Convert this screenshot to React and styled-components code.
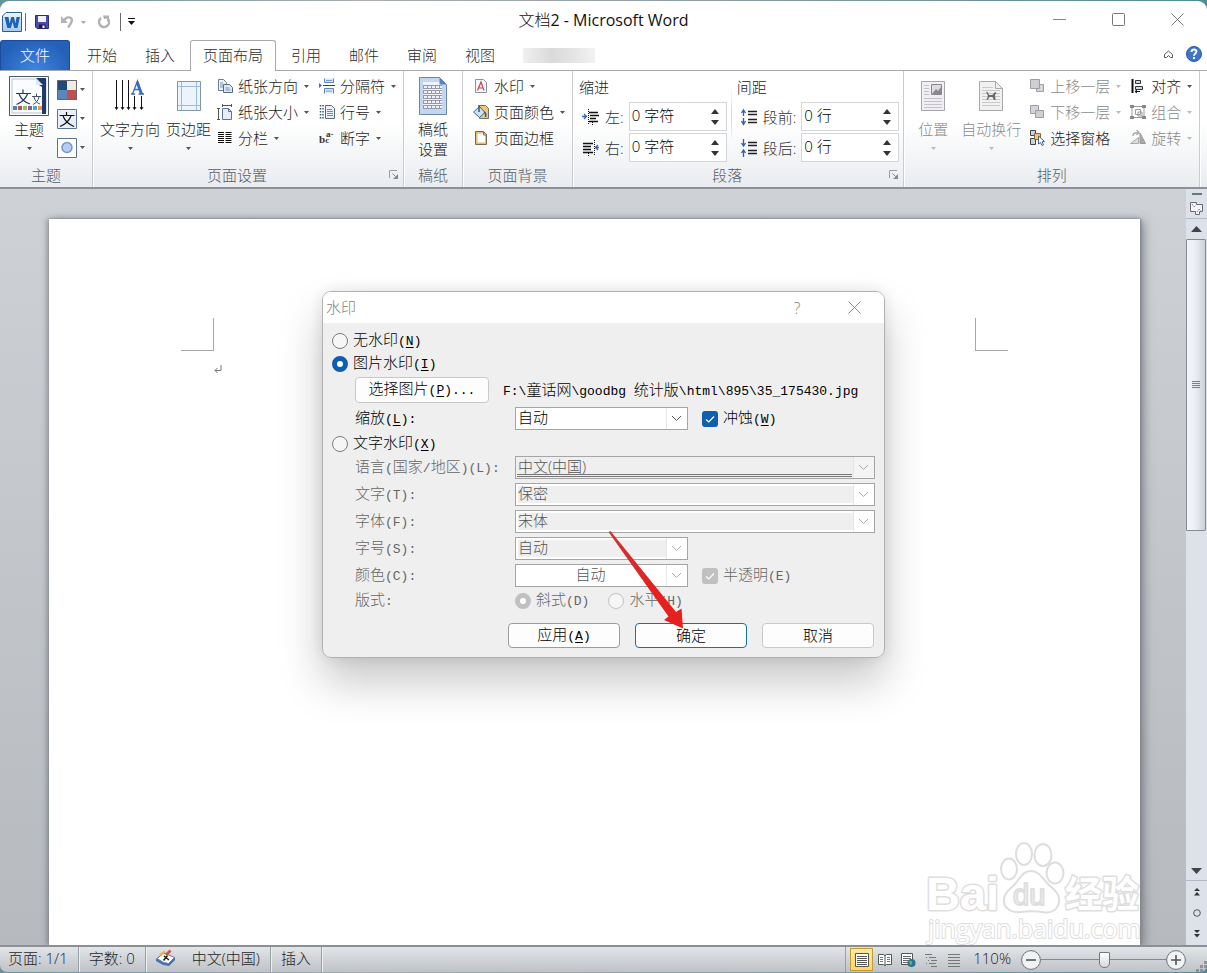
import React from "react";
import styled, { createGlobalStyle, css } from "styled-components";

const uiFont = '"Open Sans", "Noto Sans CJK SC Light", "Noto Sans CJK SC DemiLight", "Noto Sans CJK SC", sans-serif';

const Global = createGlobalStyle`
  * { box-sizing: border-box; }
  body { margin: 0; background: linear-gradient(90deg, #64949a, #a9adb0 30%, #8d9da0 60%, #4f8d92); font-family: ${uiFont}; font-size: 15px; font-weight: 350; color: #222; }
  button, input, select { font: inherit; color: inherit; }
  svg { display: block; flex: none; }
`;

/* ---------- window frame ---------- */
const Window = styled.div`
  min-height: 100vh;
  display: flex;
  flex-direction: column;
  padding: 1px 0;
`;
const PlainButton = styled.button`
  border: 0;
  padding: 0;
  background: none;
  display: flex;
  align-items: center;
  justify-content: center;
`;
const TitleBar = styled.header`
  height: 39px;
  display: grid;
  grid-template-columns: 1fr auto 1fr;
  align-items: center;
  background: #fff;
  border-radius: 9px 9px 0 0;
`;
const QuickAccess = styled.div`
  display: flex;
  align-items: center;
  gap: 11px;
  padding: 3px 0 0 2px;
`;
const QuickPair = styled.div`
  display: flex;
  align-items: center;
  gap: 7px;
`;
const QuickRule = styled.span`
  width: 1px;
  height: 18px;
  background: #6a6a6a;
  margin: ${(p) => (p.$tight ? "0 -2px 0 -4px" : "0 0 0 -2px")};
`;
const Title = styled.h1`
  margin: 0;
  padding-bottom: 2px;
  font-size: 16px;
  line-height: 20px;
  font-weight: 400;
  color: #111;
`;
const WindowButtons = styled.div`
  display: flex;
  justify-content: flex-end;
`;
const WindowButton = styled(PlainButton)`
  width: 59px;
  height: 39px;
  padding-bottom: 3px;
`;

/* ---------- tabs ---------- */
const TabBar = styled.nav`
  height: 31px;
  display: flex;
  background: #fff;
  border-bottom: 1px solid #a6a9ad;
`;
const FileTab = styled(PlainButton)`
  width: 70px;
  margin-right: 3px;
  padding-bottom: 2px;
  color: #fff;
  border: 1px solid #1c4b9c;
  border-bottom: 0;
  border-radius: 3px 3px 0 0;
  background: radial-gradient(ellipse at 50% 100%, #3f86dd, #2560b8 75%);
`;
const Tab = styled(PlainButton)`
  padding: 0 14px 2px;
  color: #2c2c2c;
  ${(p) =>
    p.$active &&
    css`
      padding: 0 12px 3px;
      margin: 0 1px -1px;
      background: #fff;
      border: 1px solid #a6a9ad;
      border-bottom: 0;
      border-radius: 3px 3px 0 0;
    `}
`;
const AddinTab = styled.div`
  align-self: center;
  width: 72px;
  height: 15px;
  margin-left: 14px;
  background: linear-gradient(90deg, #f0f0f0, #dadada 40%, #e4e4e4 70%, #f3f3f3);
`;
const TabTools = styled.div`
  margin-left: auto;
  display: flex;
  align-items: center;
  gap: 12px;
  padding: 0 5px 2px 0;
`;

/* ---------- ribbon ---------- */
const Ribbon = styled.div`
  height: 118px;
  display: flex;
  background: linear-gradient(#fff, #fff 45%, #e9ecf0);
  border-bottom: 2px solid #8d9095;
`;
const GroupBox = styled.section`
  display: flex;
  flex-direction: column;
  border-right: 1px solid #c9ccd1;
  box-shadow: 1px 0 0 #fff;
`;
const GroupBody = styled.div`
  flex: 1;
  display: flex;
  padding: 0 ${(p) => p.$right}px 0 ${(p) => p.$left}px;
  gap: ${(p) => p.$gap || 0}px;
`;
const GroupFooter = styled.div`
  height: 24px;
  display: grid;
  grid-template-columns: ${(p) => (p.$launcher ? "1fr 22px" : "1fr")};
  align-items: center;
  text-align: center;
  line-height: 20px;
  color: #565b66;
`;
const GroupLabel = styled.span`
  white-space: nowrap;
`;
const Launcher = styled(PlainButton)`
  justify-content: flex-end;
  padding-right: 4px;
`;
const BigButtonBox = styled(PlainButton)`
  flex-direction: column;
  justify-content: flex-start;
  min-width: ${(p) => p.$width || 30}px;
  padding-top: 5px;
  line-height: 20px;
  white-space: nowrap;
  color: ${(p) => (p.$dim ? "#8a8a8a" : "#1c1c1c")};
`;
const BigIcon = styled.span`
  height: 40px;
  display: flex;
  align-items: center;
  margin-bottom: 3px;
`;
const CaretBelow = styled.span`
  padding-top: 8px;
`;
const Stack = styled.div`
  display: flex;
  flex-direction: column;
  padding-top: ${(p) => p.$top || 2}px;
  margin-left: ${(p) => p.$shift || 0}px;
`;
const SmallButtonBox = styled(PlainButton)`
  height: 26px;
  justify-content: flex-start;
  gap: 5px;
  white-space: nowrap;
  line-height: 20px;
  color: ${(p) => (p.$dim ? "#8a8a8a" : "#1c1c1c")};
`;
const CaretAfter = styled.span`
  padding-left: 1px;
`;
const GalleryButton = styled(PlainButton)`
  height: 29px;
  gap: 3px;
`;
const IndentColumn = styled.div`
  display: flex;
  flex-direction: column;
  gap: 2px;
`;
const ColumnHeading = styled.div`
  height: 29px;
  padding-top: 6px;
  line-height: 20px;
`;
const SpinRow = styled.label`
  height: 29px;
  display: flex;
  align-items: center;
  gap: 5px;
  padding-left: 3px;
  color: #333;
`;
const SpinBox = styled.span`
  width: 98px;
  height: 29px;
  display: flex;
  border: 1px solid #d3d6da;
  background: #fff;
`;
const SpinInput = styled.input`
  flex: 1;
  width: 40px;
  border: 0;
  outline: 0;
  padding: 0 2px 4px;
  background: none;
  color: #000;
`;
const SpinArrows = styled.span`
  width: 22px;
  display: flex;
  flex-direction: column;
  justify-content: center;
  gap: 6px;
`;
const ColumnRule = styled.span`
  width: 1px;
  height: 62px;
  margin: 14px 5px 0 4px;
  background: linear-gradient(#fff, #d3d6da, #fff);
`;

/* ---------- workspace ---------- */
const Workspace = styled.main`
  flex: 1;
  display: flex;
  background: linear-gradient(#ced1d5, #b6babf);
`;
const Desk = styled.div`
  flex: 1;
  display: flex;
  padding: 30px 46px 0 49px;
`;
const Page = styled.article`
  flex: 1;
  display: flex;
  flex-direction: column;
  background: #fff;
  padding-top: 99px;
  box-shadow: 1px 0 2px #85898f, 4px 2px 9px rgba(70, 75, 82, 0.5), -2px 0 5px rgba(70, 75, 82, 0.4);
`;
const CropMarks = styled.div`
  display: flex;
  justify-content: space-between;
  padding: 0 132px;
`;
const CropMark = styled.span`
  width: 33px;
  height: 33px;
  border-bottom: 1px solid #a8a8a8;
  ${(p) => (p.$side === "left" ? "border-right" : "border-left")}: 1px solid #a8a8a8;
`;
const ParagraphEnd = styled.div`
  padding: 14px 0 0 164px;
`;
const Watermark = styled.div`
  margin-top: auto;
  align-self: flex-end;
`;
const Scrollbar = styled.aside`
  width: 21px;
  display: flex;
  flex-direction: column;
  align-items: stretch;
  background: #dce1ea;
`;
const ScrollButton = styled(PlainButton)`
  height: ${(p) => p.$h}px;
  border-bottom: ${(p) => (p.$line ? "1px solid #b4bac4" : "0")};
`;
const ScrollTrack = styled.div`
  flex: 1;
`;
const ScrollThumb = styled.div`
  height: 47%;
  width: 20px;
  display: flex;
  align-items: center;
  justify-content: center;
  border: 1px solid #858b96;
  border-radius: 1px;
  background: linear-gradient(90deg, #f4f6f9, #e9ecf1 50%, #ccd1d8);
`;

/* ---------- status bar ---------- */
const StatusBar = styled.footer`
  height: 27px;
  display: flex;
  align-items: stretch;
  border-top: 2px solid #8b9097;
  background: linear-gradient(#e3e6e9, #cfd2d6 50%, #bfc3c8);
  border-radius: 0 0 7px 7px;
  line-height: 22px;
  color: #1f1f1f;
`;
const StatusItem = styled.div`
  display: flex;
  align-items: center;
  gap: 16px;
  padding: 0 10px 3px ${(p) => p.$left || 10}px;
  border-right: 1px solid #9ba0a7;
  box-shadow: 1px 0 0 #edeff1;
  white-space: nowrap;
`;
const StatusRight = styled.div`
  margin-left: auto;
  display: flex;
  align-items: center;
  border-left: 1px solid #9ba0a7;
  padding-left: 4px;
`;
const ViewButton = styled(PlainButton)`
  width: 23px;
  height: 23px;
  ${(p) => p.$active && "border: 1px solid #c29b3c; background: linear-gradient(#fde9a5, #ffd75e);"}
`;
const ZoomText = styled.span`
  padding: 0 10px 3px 8px;
`;
const ZoomButton = styled(PlainButton)`
  width: 20px;
  height: 20px;
`;
const ZoomSlider = styled.input`
  appearance: none;
  width: 125px;
  height: 20px;
  margin: 0;
  background: linear-gradient(#83888f, #83888f) center / 100% 1px no-repeat;
  &::-webkit-slider-thumb {
    appearance: none;
    width: 11px;
    height: 16px;
    background: linear-gradient(#fff, #d6d9de);
    border: 1px solid #73787f;
    border-radius: 1px 1px 5px 5px;
  }
`;
const Grip = styled.span`
  align-self: flex-end;
  margin-left: 8px;
`;

/* ---------- dialog ---------- */
const Overlay = styled.div`
  position: fixed;
  inset: 0;
  display: flex;
  align-items: flex-start;
  justify-content: center;
  padding-top: 291px;
`;
const Dialog = styled.form`
  position: relative;
  width: 563px;
  max-width: 100%;
  border: 1px solid #b1b1b1;
  border-radius: 9px;
  overflow: hidden;
  background: #efefef;
  color: #000;
`;
const Shadow = styled.div`
  border-radius: 9px;
  box-shadow: 0 24px 44px rgba(0, 0, 0, 0.22), 0 0 16px rgba(0, 0, 0, 0.1);
`;
const DialogTitle = styled.div`
  height: 31px;
  display: flex;
  align-items: center;
  padding-left: 3px;
  background: #fff;
  color: #828282;
`;
const DialogName = styled.h2`
  margin: 0;
  flex: 1;
  padding-bottom: 2px;
  font-size: 15px;
  line-height: 20px;
  font-weight: inherit;
`;
const DialogIcon = styled(PlainButton)`
  width: ${(p) => p.$w}px;
  height: 30px;
  font-size: 16px;
`;
const DialogBody = styled.div`
  padding: 6px 9px 9px;
  line-height: 20px;
`;
const ChoiceRow = styled.div`
  height: 23px;
  margin-top: ${(p) => p.$top || 0}px;
  display: flex;
  align-items: center;
`;
const FieldRow = styled.div`
  display: flex;
  align-items: center;
  gap: 14px;
  height: 23px;
  padding-left: 23px;
  margin-top: ${(p) => p.$top}px;
  color: ${(p) => (p.$dim ? "#666" : "#000")};
`;
const PictureRow = styled(FieldRow)`
  height: 26px;
`;
const FieldLabel = styled.label`
  width: 160px;
  margin-right: -14px;
  white-space: nowrap;
`;
const LayoutChoices = styled.div`
  display: flex;
  gap: 19px;
`;
const Choice = styled.label`
  display: flex;
  align-items: center;
  gap: 5px;
  white-space: nowrap;
  color: ${(p) => (p.$dim ? "#666" : "#000")};
`;
const Radio = styled.input`
  appearance: none;
  width: 16px;
  height: 16px;
  margin: 0;
  border: 1px solid #7c7c7c;
  border-radius: 50%;
  background: #f6f6f6;
  &:checked { border: 5px solid #0f5fae; background: #fff; }
  &:disabled { border-color: #c4c4c4; }
  &:disabled:checked { border: 5px solid #c0c0c0; background: #fff; }
`;
const CheckWrap = styled.span`
  display: grid;
  width: 16px;
  height: 16px;
  & > * { grid-area: 1 / 1; }
  & > svg { pointer-events: none; }
`;
const Check = styled.input`
  appearance: none;
  width: 16px;
  height: 16px;
  margin: 0;
  border-radius: 3px;
  background: #0f5fae;
  &:disabled { background: #c0c0c0; }
`;
const Latin = styled.span`
  font-family: "Liberation Mono", monospace;
  font-size: 13px;
  font-weight: 400;
`;
const Key = styled.u`
  text-underline-offset: 2px;
`;
const PushButton = styled.button`
  width: ${(p) => p.$w}px;
  height: ${(p) => p.$h}px;
  padding: 0 0 2px;
  line-height: 20px;
  white-space: nowrap;
  background: #fdfdfd;
  border: 1px solid ${(p) => p.$edge || "#c9c9c9"};
  border-radius: 4px;
  color: #000;
`;
const ButtonRow = styled.div`
  display: flex;
  justify-content: flex-end;
  gap: 15px;
  margin-top: 11px;
  padding-right: 1px;
`;
const SelectBox = styled.span`
  display: grid;
  align-items: center;
  width: ${(p) => (p.$wide ? "auto" : "173px")};
  flex: ${(p) => (p.$wide ? "1" : "none")};
  & > * { grid-area: 1 / 1; }
`;
const Select = styled.select`
  appearance: none;
  width: 100%;
  height: 23px;
  border: 1px solid #a5a5a5;
  border-radius: 0;
  padding: 0 24px 3px 2px;
  line-height: 18px;
  background: ${(p) => (p.$look === "open" || p.$look === "color" ? "#fff" : "#efefef")};
  box-shadow: ${(p) => (p.$look === "closed" ? "inset 0 0 0 2px #fff" : "none")};
  text-align: ${(p) => (p.$look === "color" ? "center" : "left")};
  text-align-last: ${(p) => (p.$look === "color" ? "center" : "left")};
  opacity: 1;
  color: ${(p) => (p.$look === "open" ? "#000" : "#555")};
`;
const SelectArrow = styled.span`
  justify-self: end;
  width: 21px;
  height: 21px;
  margin-right: 1px;
  padding-right: 1px;
  display: flex;
  align-items: center;
  justify-content: center;
  border-left: 1px solid #e6e6e6;
  background: ${(p) => (p.$flat ? "#f4f4f4" : "#fff")};
  pointer-events: none;
`;
const DoubleLine = styled.span`
  align-self: end;
  height: 3px;
  margin: 0 23px 2px 2px;
  border-top: 1px solid #777;
  border-bottom: 1px solid #777;
  pointer-events: none;
`;
const Pointer = styled.svg`
  position: absolute;
  left: 283px;
  top: 237px;
  pointer-events: none;
`;

/* ---------- small parts ---------- */
function Tri({ up, w = 5, h = 3, fill = "#555" }) {
  return (
    <svg width={w} height={h} viewBox="0 0 10 6" preserveAspectRatio="none">
      <path d={up ? "M0 6h10L5 0z" : "M0 0h10L5 6z"} fill={fill} />
    </svg>
  );
}
function Group({ label, launcher, children, left = 0, right = 0, gap = 0 }) {
  return (
    <GroupBox>
      <GroupBody $left={left} $right={right} $gap={gap}>{children}</GroupBody>
      <GroupFooter $launcher={launcher}>
        <GroupLabel>{label}</GroupLabel>
        {launcher && (
          <Launcher type="button" aria-label={label + "…"}>
            <svg width="10" height="10" viewBox="0 0 10 10">
              <path d="M.5 8V.5H8" fill="none" stroke="#9a9da3" />
              <path d="M9 4v5H4z" fill="#85898f" />
              <path d="M3.500 3.500l3 3" fill="none" stroke="#85898f" />
            </svg>
          </Launcher>
        )}
      </GroupFooter>
    </GroupBox>
  );
}
function Big({ icon, lines, caret = true, dim, width }) {
  return (
    <BigButtonBox type="button" $dim={dim} $width={width}>
      <BigIcon>{icon}</BigIcon>
      {lines.map((l) => <span key={l}>{l}</span>)}
      {caret && <CaretBelow><Tri fill={dim ? "#bbb" : "#555"} /></CaretBelow>}
    </BigButtonBox>
  );
}
function Small({ icon, label, caret = true, dim }) {
  return (
    <SmallButtonBox type="button" $dim={dim}>
      {icon}
      <span>{label}</span>
      {caret && <CaretAfter><Tri fill={dim ? "#bbb" : "#555"} /></CaretAfter>}
    </SmallButtonBox>
  );
}
function Spin({ icon, label, value }) {
  return (
    <SpinRow>
      {icon}
      <span>{label}</span>
      <SpinBox>
        <SpinInput defaultValue={value} />
        <SpinArrows>
          <PlainButton type="button" tabIndex={-1}><Tri up w={8} h={5} fill="#333" /></PlainButton>
          <PlainButton type="button" tabIndex={-1}><Tri w={8} h={5} fill="#333" /></PlainButton>
        </SpinArrows>
      </SpinBox>
    </SpinRow>
  );
}
/* Splits a caption into Han and Latin runs; "&" marks the access key. */
function Mixed({ children }) {
  return children.split(/([\x20-\x7e]+)/).filter(Boolean).map((run, i) => {
    if (!/^[\x20-\x7e]/.test(run)) return run;
    const at = run.indexOf("&");
    return (
      <Latin key={i}>
        {at < 0 ? run : <>{run.slice(0, at)}<Key>{run[at + 1]}</Key>{run.slice(at + 2)}</>}
      </Latin>
    );
  });
}
function Drop({ id, value, look = "closed", wide }) {
  const off = look !== "open";
  return (
    <SelectBox $wide={wide}>
      <Select id={id} $look={look} disabled={off} defaultValue={value}>
        <option>{value}</option>
      </Select>
      {look === "flat" && <DoubleLine />}
      <SelectArrow $flat={look === "flat"}>
        <svg width="11" height="7" viewBox="0 0 11 7">
          <path d="M1 1l4.500 4.500L10 1" fill="none" stroke={off ? "#aaa" : "#555"} />
        </svg>
      </SelectArrow>
    </SelectBox>
  );
}
function RadioChoice({ name, children, ...rest }) {
  return (
    <Choice $dim={rest.disabled}>
      <Radio type="radio" name={name} {...rest} />
      <span><Mixed>{children}</Mixed></span>
    </Choice>
  );
}
function CheckChoice({ children, disabled }) {
  return (
    <Choice $dim={disabled}>
      <CheckWrap>
        <Check type="checkbox" defaultChecked disabled={disabled} />
        <svg width="16" height="16" viewBox="0 0 16 16">
          <path d="M4 8.500l2.800 2.500L12 5.500" fill="none" stroke="#fff" strokeWidth="1.200" />
        </svg>
      </CheckWrap>
      <span><Mixed>{children}</Mixed></span>
    </Choice>
  );
}

/* ---------- icons ---------- */
const Ico = ({ w = 16, h = 16, children }) => (
  <svg width={w} height={h} viewBox={`0 0 ${w} ${h}`} fill="none">{children}</svg>
);
const WordIcon = () => (
  <Ico w={20} h={20}>
    <defs><linearGradient id="wd" x2="0" y2="1"><stop stopColor="#eef6fd" /><stop offset="1" stopColor="#a3c8ee" /></linearGradient></defs>
    <path d="M4 .5h15.500v19H.5V4z" fill="url(#wd)" stroke="#2e5a96" />
    <path d="M2.500 5h4l1.200 6.500L9.200 5h2.800l1.300 6.500L14.500 5h3.500l-2.500 11h-3.200L10.500 10l-1.700 6H5.300z" fill="#1f63b8" />
  </Ico>
);
const SaveIcon = () => (
  <Ico w={14} h={14}>
    <path d="M.5.5h13v13H2L.5 12z" fill="#4a4bb0" stroke="#2b2b7c" />
    <path d="M3 1h8v6H3z" fill="#eef1fa" /><path d="M4 9.500h6.500v4H4z" fill="#1c1c44" /><path d="M7.500 10.500h2v2.500h-2z" fill="#fff" />
  </Ico>
);
const UndoIcon = () => (
  <Ico w={14} h={14}>
    <path d="M1 1v7h7z" fill="#b3b3b3" /><path d="M4 5.500c2-4 7-4 7.800-1 .6 3-1.800 5-3.800 8" stroke="#b3b3b3" strokeWidth="2.400" />
  </Ico>
);
const RedoIcon = () => (
  <Ico w={14} h={14}>
    <path d="M4 3A5 5 0 1 0 11 4" stroke="#b0b0b0" strokeWidth="2.400" /><path d="M6 .5h6v6H10V3.500L7 4z" fill="#b0b0b0" />
  </Ico>
);
const CustomIcon = () => <Ico w={8} h={8}><path d="M0 .5h7" stroke="#111" /><path d="M0 3h7L3.500 7z" fill="#111" /></Ico>;
const ThemeIcon = () => (
  <Ico w={40} h={40}>
    <path d="M.5.5h39v39H.5z" fill="#fff" stroke="#4c5868" /><path d="M3 3h34v34H3z" fill="#fbfcfe" stroke="#b9c3d0" />
    <path d="M27 2h10v36h-4V11l-6-4z" fill="#1d3a6c" /><path d="M27 2v7h7z" fill="#dfe7f2" />
    <path d="M7 17.500h15M14 13.500v4M18.500 18c-2 5-5 8-11 10.500M10 18c2 5 5 8 11 10" stroke="#263a55" strokeWidth="1.200" />
    <path d="M23 20.500h9M27.500 17.500v3M30 21c-1 4-3 6-6 7.500M25 21c1 4 3 6 6 7" stroke="#456" strokeWidth="1" />
    {["#4f81bd", "#c0504d", "#9bbb59", "#8064a2", "#4bacc6", "#f79646"].map((c, i) => <rect key={c} x={4 + i * 5} y="30" width="4" height="4" fill={c} />)}
  </Ico>
);
const ColorsIcon = () => (
  <Ico w={20} h={20}><path d="M0 0h20v20H0z" fill="#66686b" /><path d="M1 1h9v9H1z" fill="#1f497d" /><path d="M10 1h9v9h-9z" fill="#eeece1" /><path d="M1 10h9v9H1z" fill="#5a86bf" /><path d="M10 10h9v9h-9z" fill="#c0504d" /></Ico>
);
const FontsIcon = () => (
  <Ico w={20} h={20}><path d="M.5.5h19v19H.5z" fill="#e8eff8" stroke="#5d7494" /><path d="M2.500 6.500h15M9.500 3v3M14 7c-2 5-5 8-11 10.500M6 7c2 5 5 8 11 10.500" stroke="#111" strokeWidth="1.200" /></Ico>
);
const EffectsIcon = () => (
  <Ico w={20} h={20}><path d="M.5.5h19v19H.5z" fill="#fff" stroke="#5d7494" /><circle cx="10" cy="9.500" r="5" fill="#b5cdf0" stroke="#7695c8" strokeWidth="1.500" /></Ico>
);
const TextDirIcon = () => (
  <Ico w={32} h={34}>
    {[2.5, 8.500, 14.500].map((x) => <path key={x} d={`M${x} 1v29M${x - 1.500} 28l1.500 2.500 1.500-2.500`} stroke="#111" />)}
    {[20.5, 27.500].map((x) => <path key={x} d={`M${x} 17v13M${x - 1.500} 28l1.500 2.500 1.500-2.500`} stroke="#111" />)}
    <path d="M17 15h4M24.500 15h5.500M18.500 15l5-13 4.500 13M20.500 10.500h5" stroke="#3a6cb8" strokeWidth="1.300" />
    <path d="M23 3l4.500 12" stroke="#3a6cb8" strokeWidth="2.800" />
  </Ico>
);
const MarginsIcon = () => (
  <Ico w={26} h={30}><path d="M1.500.5h23v29h-23z" fill="#edf3fb" stroke="#8195ab" /><path d="M5.500 1v28M20.500 1v28M2 5.500h22M2 24.500h22" stroke="#9dbcd9" /></Ico>
);
const OrientIcon = () => (
  <Ico><path d="M1.500 1.500h5l3 3v8h-8z" fill="#eef3fa" stroke="#6a7d96" /><path d="M6.500 6.500h6l3 3v5h-9z" fill="#dfe9f6" stroke="#56697f" /><path d="M3 5h3M3 7h3M3 9h3M8.500 10h4M8.500 12h5" stroke="#7b93b3" /></Ico>
);
const SizeIcon = () => (
  <Ico><path d="M5.500 4.500h6l3 3v8h-9z" fill="#e5eef8" stroke="#5b7492" /><path d="M5 1.500h10M5.500 0v3M14.500 0v3M1.500 5v10M0 4.500h3M0 15.500h3" stroke="#555" /><path d="M11.500 4.500v3h3" stroke="#5b7492" /></Ico>
);
const ColumnsIcon = () => <Ico>{[3.5, 5.500, 7.500, 9.500, 11.500, 13.500].map((y) => <path key={y} d={`M1 ${y - 1}h6M8.500 ${y - 1}h6`} stroke="#111" />)}</Ico>;
const BreakIcon = () => (
  <Ico><path d="M5.500.5v4h9v-4M5.500 15.500v-5h9v5" fill="#dbe8f8" stroke="#5d84b8" /><path d="M4 7.500h12" stroke="#345" /><path d="M0 5l3 2.500L0 10z" fill="#3f6fb5" /><path d="M7 2.500h6M7 13h6" stroke="#7b9cc8" /></Ico>
);
const LineNoIcon = () => (
  <Ico><path d="M6.500 1.500h6l3 3v10h-9z" fill="#eaf1fa" stroke="#56697f" /><path d="M8 5.500h5M8 7.500h6M8 9.500h6M8 11.500h6" stroke="#6c8cb8" /><path d="M1.500 1v14M4 1v14" stroke="#34528a" strokeWidth="1.500" strokeDasharray="1.500 1.500" /></Ico>
);
const HyphenIcon = () => (
  <Ico h={18}><text x="0" y="14" fontFamily="Liberation Serif, serif" fontWeight="700" fontSize="11" fill="#333">b<tspan fontSize="9">c</tspan><tspan x="7" y="8" fontSize="9">a-</tspan></text></Ico>
);
const GridPaperIcon = () => (
  <Ico w={30} h={38}>
    <path d="M1.500.5h20l7 7v30h-27z" fill="#c5d7ef" stroke="#6a86ae" /><path d="M5 5h19v27H5z" fill="#f0f4fa" />
    {[8, 13, 18, 23, 28].map((y) => <path key={y} d={`M5 ${y + .5}h19M5 ${y + 3.500}h19`} stroke="#949aa5" />)}
    {[5, 9, 13, 17, 21].map((x) => <path key={x} d={`M${x + .5} 8v24`} stroke="#949aa5" strokeDasharray="4 1" />)}
    <path d="M21.500.5v7h7z" fill="#5b84bd" />
  </Ico>
);
const MarkIcon = () => (
  <Ico><path d="M2.500 1.500h8l3 3v10h-11z" fill="#f4f6f9" stroke="#8792a3" /><path d="M4.500 12.500L8 4l3 8.500M5.500 10h5" stroke="#c8494c" strokeWidth="1.200" /></Ico>
);
const PageColorIcon = () => (
  <Ico><path d="M6.500 1.500h6l3 3v10h-9z" fill="#f5c869" stroke="#5b7492" /><path d="M6.500 2.500l5.500 6-5.500 5-6-5.500z" fill="#cfe0f4" stroke="#42618d" /><path d="M6 8V1M11 8c2 1 2 3 1.500 5" stroke="#2e568f" strokeWidth="1.500" /></Ico>
);
const BorderIcon = () => (
  <Ico><path d="M3.500 2.500h7l2.500 2.500v8.500h-9.500z" fill="#fff" stroke="#e0bb78" strokeWidth="2" /><path d="M2.500 1.500h8l3 3v10h-11z" stroke="#7b6a4c" /><path d="M10.500 1.500v3.500h3" stroke="#6b7688" /></Ico>
);
const IndentIcon = ({ right }) => (
  <Ico w={18} h={16}>
    <path d={right ? "M1 3.500h10M1 6.500h8M1 9.500h8M1 12.500h10" : "M7 3.500h9M8 6.500h9M8 9.500h6M7 12.500h9"} stroke="#111" strokeWidth="1.600" />
    <path d={right ? "M12.500 0v16M6.500 13v3" : "M6.500 0v16M10.500 13v3"} stroke="#111" strokeDasharray="1 1" />
    <path d={right ? "M17 7.500h-3M16 5l-2.500 2.500L16 10" : "M0 7.500h4M2 5l2.500 2.500L2 10"} stroke="#3c66b4" strokeWidth="1.400" />
  </Ico>
);
const SpacingIcon = ({ after }) => (
  <Ico w={18} h={18}>
    <path d="M8 3.500h9M8 6.500h9M8 11.500h9M8 14.500h9" stroke="#222" strokeWidth="1.300" />
    <path d={after ? "M3.500 0v6M1.500 4l2 3 2-3M3.500 11v7M1.500 14l2-3 2 3" : "M3.500 2v6M1.500 5l2-3 2 3M3.500 10v7M1.500 13l2 3.500 2-3.500"} stroke="#35629f" strokeWidth="1.300" />
  </Ico>
);
const PositionIcon = () => (
  <Ico w={24} h={30}><path d="M.5.5h23v29H.5z" fill="#f1eff3" stroke="#a9a5ad" /><path d="M10.500 3.500h10v10h-10z" fill="#dddbe0" stroke="#8b878f" /><path d="M11 13l4-5 2 2 3-4v7z" fill="#8b878f" />{[4, 7, 10, 13].map((y) => <path key={y} d={`M3 ${y}.500h5`} stroke="#c5c1c9" />)}{[17, 20, 23, 26].map((y) => <path key={y} d={`M3 ${y}.500h18`} stroke="#c5c1c9" />)}</Ico>
);
const WrapIcon = () => (
  <Ico w={24} h={30}><path d="M.5.5h16l7 7v22H.5z" fill="#f1f1f2" stroke="#a9a9ab" /><path d="M16.500.5v7h7" stroke="#a9a9ab" />{[6, 9, 12, 15, 18, 21, 24].map((y) => <path key={y} d={`M3 ${y}.500h${y < 9 ? 11 : 18}`} stroke="#c9c9cb" />)}<path d="M7 10.500l2 1 1 2.500h3.500l2.500-3 1.500 1-1.500 2 .5 5h-1.500l-1.500-3h-3l-2 3H7.500l1.500-4z" fill="#666" /></Ico>
);
const LayerIcon = ({ back }) => (
  <Ico><path d={back ? "M1.500 1.500h8v8h-8z" : "M7.500 6.500h7v7h-7z"} fill="#d6d4d9" stroke="#9f9da2" /><path d={back ? "M6.500 6.500h8v7h-8z" : "M1.500 1.500h9v9h-9z"} fill="#d0ced3" stroke="#9f9da2" /></Ico>
);
const PaneIcon = () => (
  <Ico><path d="M1.500.5h5v5h-5zM1.500 8.500h5v6h-5z" fill="#c9d3e2" stroke="#444" /><path d="M5.500 3.500h6v6h-6z" fill="#f6c56b" stroke="#8a6a2c" /><path d="M9.500 6l6 5.500-2.500.3 1.500 3-1.500.7-1.500-3-2 1.500z" fill="#fff" stroke="#44608c" /></Ico>
);
const AlignIcon = () => (
  <Ico><path d="M2.500 1v14" stroke="#111" strokeWidth="2" /><path d="M5.500 2.500h5v3h-5zM5.500 8.500h7v3h-7z" fill="#cfd9e6" stroke="#333" /><path d="M10 13.500H5M7 12l-2 1.500L7 15" stroke="#111" /></Ico>
);
const CombineIcon = () => (
  <Ico><path d="M2 2.500h12v11H2zM5.500 5.500h5v5h-5zM8 8h4v4H8z" stroke="#9a9a9a" /><path d="M0 1h4v3H0zM12 1h4v3h-4zM0 12h4v3H0zM12 12h4v3h-4z" fill="#888" /></Ico>
);
const RotateIcon = () => (
  <Ico><path d="M.5 13.500h8v-6z" fill="#ddd" stroke="#aaa" /><path d="M10 3v10.500h5.500z" fill="#aaa" stroke="#999" /><path d="M3 6c0-3 2-3.500 5-3.500M6.500 0L9 2.500 6.500 5" stroke="#aaa" strokeWidth="1.400" /></Ico>
);
const HelpIcon = () => (
  <Ico><circle cx="8" cy="8" r="7.500" fill="#3f74c8" stroke="#2c58a3" /><path d="M5.500 6c0-3.500 5-3.200 5-.4C10.500 7.500 8 7.700 8 9.800M8 11v2" stroke="#fff" strokeWidth="1.900" /></Ico>
);
const ProofIcon = () => (
  <Ico w={20} h={18}><path d="M0 10l7-6 12 5v2l-6 6-6-1-7-4z" fill="#4a6fae" /><path d="M1 9.500l7-5.500 10.500 4.500-6 6-5-1z" fill="#fff" stroke="#5f79a5" /><path d="M8 7l5 4M11.500 6.500l-4 5" stroke="#222" strokeWidth="1.600" /><path d="M9 5l4.500-4.500 2 2L11 7z" fill="#d9534a" /><path d="M4 6.500l5-4" stroke="#e3b44c" strokeWidth="2.500" /></Ico>
);
const LinesIcon = ({ kind }) => {
  if (kind === "print") return <Ico><path d="M1.500 1.500h13v13h-13z" fill="#fff" stroke="#555" /><path d="M3 4.500h10M3 6.500h10M3 8.500h10M3 10.500h10M3 12.500h10" stroke="#555" /></Ico>;
  if (kind === "read") return <Ico><path d="M1.500 2.500h5l1.500 1 1.500-1h5v10h-5l-1.500 1-1.500-1h-5zM8 3v11" fill="#fff" stroke="#555" /><path d="M3 5.500h3M3 7.500h3M3 9.500h3M10 5.500h3M10 7.500h3M10 9.500h3" stroke="#777" /></Ico>;
  if (kind === "web") return <Ico><path d="M1.500 1.500h11v11h-11z" fill="#fff" stroke="#555" /><path d="M3 4.500h8M3 6.500h8M3 8.500h5M3 10.500h5" stroke="#666" /><circle cx="11.500" cy="11" r="4" fill="#2e6f94" /><path d="M9 9.500c2-2 4 0 3 2s-1 2-2 1z" fill="#64b865" /></Ico>;
  if (kind === "outline") return <Ico><path d="M2 2.500h7M6 5.500h7M8 8.500h6M6 11.500h7M8 14.500h6" stroke="#777" /><path d="M3 5.500h1M5 8.500h1M3 11.500h1" stroke="#777" /></Ico>;
  return <Ico><path d="M2 2.500h12M2 5.500h12M2 8.500h12M2 11.500h12M2 14.500h12" stroke="#777" /></Ico>;
};
const ZoomIcon = ({ plus }) => (
  <Ico w={20} h={20}><circle cx="10" cy="10" r="9.400" fill="#f1f2f4" stroke="#6d7278" /><path d={plus ? "M5 10h10M10 5v10" : "M5 10h10"} stroke="#555" strokeWidth="1.600" /></Ico>
);
const PageJump = ({ down }) => (
  <Ico w={8} h={8}><path d={down ? "M1 0h6L4 3zM1 4h6L4 7.500z" : "M4 0l3 3H1zM4 4l3 3.500H1z"} fill="#333" /></Ico>
);
const BaiduMark = () => (
  <svg width="217" height="104" viewBox="0 0 217 104" fill="#fff" stroke="#dedede" strokeWidth="2" strokeLinejoin="round">
    <g fontFamily='"Liberation Sans", Arial, sans-serif' fontWeight="700" paintOrder="stroke">
      <text x="3" y="69" fontSize="47" strokeWidth="3">Bai</text>
      <text x="142" y="67" fontSize="37" strokeWidth="3" fontFamily='"Noto Sans CJK SC", sans-serif'>经验</text>
      <text x="5" y="97" fontSize="25" fontWeight="400" fontFamily='"Open Sans", sans-serif'>jingyan.baidu.com</text>
    </g>
    <ellipse cx="86" cy="28" rx="8" ry="10.500" /><ellipse cx="101" cy="13" rx="8" ry="11" /><ellipse cx="120" cy="14" rx="8.500" ry="11" /><ellipse cx="132" cy="32" rx="8.500" ry="10.500" />
    <path d="M108 30c8 0 11 7 17 13s12 9 11 18c-1 8-9 12-16 10-8-1-15-1-23 0-8 1-15-3-16-10-1-8 5-12 11-18 6-7 8-13 16-13z" />
    <text x="90" y="64" fontSize="29" fontFamily='"Liberation Sans", Arial, sans-serif'>du</text>
  </svg>
);

export default function App() {
  return (
    <>
      <Global />
      <Window>
        <TitleBar>
          <QuickAccess>
            <QuickPair><WordIcon /><QuickRule $tight /></QuickPair>
            <PlainButton type="button" aria-label="保存"><SaveIcon /></PlainButton>
            <QuickPair>
              <PlainButton type="button" aria-label="撤消"><UndoIcon /></PlainButton>
              <Tri fill="#aaa" />
            </QuickPair>
            <PlainButton type="button" aria-label="恢复"><RedoIcon /></PlainButton>
            <QuickPair>
              <QuickRule />
              <PlainButton type="button" aria-label="自定义"><CustomIcon /></PlainButton>
            </QuickPair>
          </QuickAccess>
          <Title>文档2 - Microsoft Word</Title>
          <WindowButtons>
            <WindowButton type="button" aria-label="最小化"><Ico w={13} h={13}><path d="M0 6.500h13" stroke="#888" /></Ico></WindowButton>
            <WindowButton type="button" aria-label="最大化"><Ico w={13} h={13}><rect x=".5" y=".5" width="12" height="12" rx="1" stroke="#777" /></Ico></WindowButton>
            <WindowButton type="button" aria-label="关闭"><Ico w={13} h={13}><path d="M.5.5l12 12M12.500.5l-12 12" stroke="#777" /></Ico></WindowButton>
          </WindowButtons>
        </TitleBar>
        <TabBar>
          <FileTab type="button">文件</FileTab>
          {["开始", "插入", "页面布局", "引用", "邮件", "审阅", "视图"].map((t) => (
            <Tab key={t} type="button" $active={t === "页面布局"}>{t}</Tab>
          ))}
          <AddinTab />
          <TabTools>
            <PlainButton type="button" aria-label="折叠"><Ico w={11} h={9}><path d="M1.500 4.500l4-3.500 4 3.500v3h-2l-2-2-2 2h-2z" stroke="#555" /></Ico></PlainButton>
            <PlainButton type="button" aria-label="帮助"><HelpIcon /></PlainButton>
          </TabTools>
        </TabBar>
        <Ribbon>
          <Group label="主题" left={9} right={7} gap={8}>
            <Big icon={<ThemeIcon />} lines={["主题"]} width={40} />
            <Stack $top={4}>
              <GalleryButton type="button" aria-label="颜色"><ColorsIcon /><Tri /></GalleryButton>
              <GalleryButton type="button" aria-label="字体"><FontsIcon /><Tri /></GalleryButton>
              <GalleryButton type="button" aria-label="效果"><EffectsIcon /><Tri /></GalleryButton>
            </Stack>
          </Group>
          <Group label="页面设置" launcher left={7} right={7} gap={6}>
            <Big icon={<TextDirIcon />} lines={["文字方向"]} />
            <Big icon={<MarginsIcon />} lines={["页边距"]} />
            <Stack>
              <Small icon={<OrientIcon />} label="纸张方向" />
              <Small icon={<SizeIcon />} label="纸张大小" />
              <Small icon={<ColumnsIcon />} label="分栏" />
            </Stack>
            <Stack $shift={4}>
              <Small icon={<BreakIcon />} label="分隔符" />
              <Small icon={<LineNoIcon />} label="行号" />
              <Small icon={<HyphenIcon />} label="断字" />
            </Stack>
          </Group>
          <Group label="稿纸" left={14} right={14}>
            <Big icon={<GridPaperIcon />} lines={["稿纸", "设置"]} caret={false} />
          </Group>
          <Group label="页面背景" left={10} right={7}>
            <Stack>
              <Small icon={<MarkIcon />} label="水印" />
              <Small icon={<PageColorIcon />} label="页面颜色" />
              <Small icon={<BorderIcon />} label="页面边框" caret={false} />
            </Stack>
          </Group>
          <Group label="段落" launcher left={6} right={4}>
            <IndentColumn>
              <ColumnHeading>缩进</ColumnHeading>
              <Spin icon={<IndentIcon />} label="左:" value="0 字符" />
              <Spin icon={<IndentIcon right />} label="右:" value="0 字符" />
            </IndentColumn>
            <ColumnRule />
            <IndentColumn>
              <ColumnHeading>间距</ColumnHeading>
              <Spin icon={<SpacingIcon />} label="段前:" value="0 行" />
              <Spin icon={<SpacingIcon after />} label="段后:" value="0 行" />
            </IndentColumn>
          </Group>
          <Group label="排列" left={14} right={7} gap={13}>
            <Big icon={<PositionIcon />} lines={["位置"]} dim />
            <Big icon={<WrapIcon />} lines={["自动换行"]} dim />
            <Stack $shift={-5}>
              <Small icon={<LayerIcon />} label="上移一层" dim />
              <Small icon={<LayerIcon back />} label="下移一层" dim />
              <Small icon={<PaneIcon />} label="选择窗格" caret={false} />
            </Stack>
            <Stack $shift={-4}>
              <Small icon={<AlignIcon />} label="对齐" />
              <Small icon={<CombineIcon />} label="组合" dim />
              <Small icon={<RotateIcon />} label="旋转" dim />
            </Stack>
          </Group>
        </Ribbon>
        <Workspace>
          <Desk>
            <Page>
              <CropMarks><CropMark $side="left" /><CropMark $side="right" /></CropMarks>
              <ParagraphEnd><Ico w={9} h={9}><path d="M8 0v5.500H2M4.500 3L2 5.500 4.500 8" stroke="#777" /></Ico></ParagraphEnd>
              <Watermark><BaiduMark /></Watermark>
            </Page>
          </Desk>
          <Scrollbar>
            <ScrollButton type="button" $h={10} aria-label="拆分"><Ico w={10} h={2}><path d="M0 1h10" stroke="#6f7580" strokeWidth="2" /></Ico></ScrollButton>
            <ScrollButton type="button" $h={20} $line aria-label="标尺"><Ico w={13} h={13}><path d="M.5.500h6v2h6v7h-3v3h-4v-3h-5z" fill="#f4f5f8" stroke="#6c6a74" /><path d="M2 2l2 3 2-2M7 10l2-3 2 2" stroke="#6c6a74" strokeDasharray="1 1" /></Ico></ScrollButton>
            <ScrollButton type="button" $h={20} aria-label="向上"><Tri up w={11} h={6} fill="#444" /></ScrollButton>
            <ScrollTrack>
              <ScrollThumb><Ico w={8} h={8}><path d="M0 .5h8M0 2.500h8M0 4.500h8M0 6.500h8" stroke="#7b818b" /></Ico></ScrollThumb>
            </ScrollTrack>
            <ScrollButton type="button" $h={20} $line aria-label="向下"><Tri w={11} h={6} fill="#444" /></ScrollButton>
            <ScrollButton type="button" $h={21} aria-label="上一页"><PageJump /></ScrollButton>
            <ScrollButton type="button" $h={21} aria-label="选择浏览对象"><Ico w={8} h={8}><circle cx="4" cy="4" r="3.300" stroke="#555" /></Ico></ScrollButton>
            <ScrollButton type="button" $h={22} aria-label="下一页"><PageJump down /></ScrollButton>
          </Scrollbar>
        </Workspace>
        <StatusBar>
          <StatusItem $left={8}>页面: 1/1</StatusItem>
          <StatusItem>字数: 0</StatusItem>
          <StatusItem><ProofIcon />中文(中国)</StatusItem>
          <StatusItem>插入</StatusItem>
          <StatusRight>
            <ViewButton type="button" $active aria-label="页面视图"><LinesIcon kind="print" /></ViewButton>
            <ViewButton type="button" aria-label="阅读版式"><LinesIcon kind="read" /></ViewButton>
            <ViewButton type="button" aria-label="Web 版式"><LinesIcon kind="web" /></ViewButton>
            <ViewButton type="button" aria-label="大纲"><LinesIcon kind="outline" /></ViewButton>
            <ViewButton type="button" aria-label="草稿"><LinesIcon kind="draft" /></ViewButton>
            <ZoomText>110%</ZoomText>
            <ZoomButton type="button" aria-label="缩小"><ZoomIcon /></ZoomButton>
            <ZoomSlider type="range" min="0" max="100" defaultValue="51" aria-label="显示比例" />
            <ZoomButton type="button" aria-label="放大"><ZoomIcon plus /></ZoomButton>
            <Grip><Ico w={13} h={13}><path d="M10 2h3v3h-3zM6 6h3v3H6zM10 6h3v3h-3zM2 10h3v3H2zM6 10h3v3H6z" fill="#8d939b" /></Ico></Grip>
          </StatusRight>
        </StatusBar>
      </Window>
      <Overlay>
        <Shadow>
          <Dialog role="dialog" aria-label="水印" onSubmit={(e) => e.preventDefault()}>
            <DialogTitle>
              <DialogName>水印</DialogName>
              <DialogIcon type="button" $w={54} aria-label="帮助">?</DialogIcon>
              <DialogIcon type="button" $w={60} aria-label="关闭"><Ico w={13} h={13}><path d="M.5.5l12 12M12.500.5l-12 12" stroke="#888" /></Ico></DialogIcon>
            </DialogTitle>
            <DialogBody>
              <ChoiceRow><RadioChoice name="kind">无水印(&N)</RadioChoice></ChoiceRow>
              <ChoiceRow><RadioChoice name="kind" defaultChecked>图片水印(&I)</RadioChoice></ChoiceRow>
              <PictureRow $top={2}>
                <PushButton type="button" $w={134} $h={26}><Mixed>选择图片(&P)...</Mixed></PushButton>
                <span><Mixed>{"F:\\童话网\\goodbg 统计版\\html\\895\\35_175430.jpg"}</Mixed></span>
              </PictureRow>
              <FieldRow $top={4}>
                <FieldLabel htmlFor="scale"><Mixed>缩放(&L):</Mixed></FieldLabel>
                <Drop id="scale" value="自动" look="open" />
                <CheckChoice>冲蚀(&W)</CheckChoice>
              </FieldRow>
              <ChoiceRow $top={2}><RadioChoice name="kind">文字水印(&X)</RadioChoice></ChoiceRow>
              <FieldRow $top={1} $dim>
                <FieldLabel htmlFor="lang"><Mixed>语言(国家/地区)(L):</Mixed></FieldLabel>
                <Drop id="lang" value="中文(中国)" look="flat" wide />
              </FieldRow>
              <FieldRow $top={4} $dim>
                <FieldLabel htmlFor="text"><Mixed>文字(T):</Mixed></FieldLabel>
                <Drop id="text" value="保密" wide />
              </FieldRow>
              <FieldRow $top={4} $dim>
                <FieldLabel htmlFor="font"><Mixed>字体(F):</Mixed></FieldLabel>
                <Drop id="font" value="宋体" wide />
              </FieldRow>
              <FieldRow $top={4} $dim>
                <FieldLabel htmlFor="size"><Mixed>字号(S):</Mixed></FieldLabel>
                <Drop id="size" value="自动" />
              </FieldRow>
              <FieldRow $top={4} $dim>
                <FieldLabel htmlFor="color"><Mixed>颜色(C):</Mixed></FieldLabel>
                <Drop id="color" value="自动" look="color" />
                <CheckChoice disabled>半透明(E)</CheckChoice>
              </FieldRow>
              <FieldRow $top={2} $dim>
                <FieldLabel as="span"><Mixed>版式:</Mixed></FieldLabel>
                <LayoutChoices>
                  <RadioChoice name="layout" defaultChecked disabled>斜式(D)</RadioChoice>
                  <RadioChoice name="layout" disabled>水平(H)</RadioChoice>
                </LayoutChoices>
              </FieldRow>
              <ButtonRow>
                <PushButton type="button" $w={112} $h={25} $edge="#9c9c9c"><Mixed>应用(&A)</Mixed></PushButton>
                <PushButton type="submit" $w={112} $h={25} $edge="#1273a6">确定</PushButton>
                <PushButton type="button" $w={112} $h={25}>取消</PushButton>
              </ButtonRow>
            </DialogBody>
            <Pointer width="80" height="102" viewBox="0 0 80 102">
              <defs><linearGradient id="arrow" x2="1" y2="1"><stop stopColor="#c63a36" /><stop offset=".6" stopColor="#e5201f" /></linearGradient></defs>
              <path d="M4.500 2L70 83l5.500-3.500L77 99.500 58 91l4.500-3.500L2.500 3z" fill="url(#arrow)" />
            </Pointer>
          </Dialog>
        </Shadow>
      </Overlay>
    </>
  );
}
